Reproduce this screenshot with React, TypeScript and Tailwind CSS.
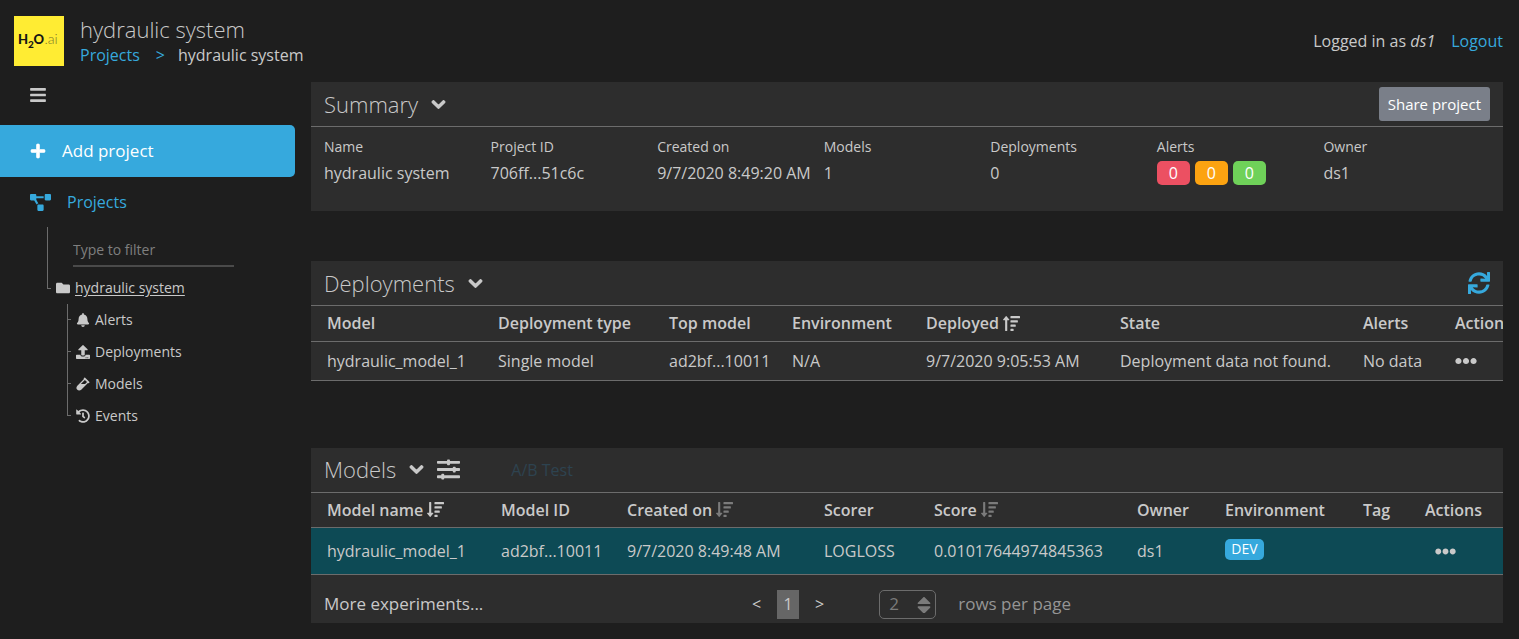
import type { ReactNode } from "react";
import {
  FaBars,
  FaBell,
  FaCaretDown,
  FaCaretUp,
  FaChevronDown,
  FaEllipsisH,
  FaFolder,
  FaHistory,
  FaPlus,
  FaProjectDiagram,
  FaSlidersH,
  FaSortAmountDown,
  FaSortAmountUp,
  FaSync,
  FaUpload,
  FaVial,
} from "react-icons/fa";

type Column = { label: string; width: string; icon?: ReactNode };

const deploymentColumns: Column[] = [
  { label: "Model", width: "w-[187px]" },
  { label: "Deployment type", width: "w-[171px]" },
  { label: "Top model", width: "w-[123px]" },
  { label: "Environment", width: "w-[134px]" },
  { label: "Deployed", width: "w-[194px]", icon: <FaSortAmountUp className="size-[17px]" /> },
  { label: "State", width: "w-[243px]" },
  { label: "Alerts", width: "w-[92px]" },
  { label: "Actions", width: "w-auto" },
];

const modelColumns: Column[] = [
  { label: "Model name", width: "w-[190px]", icon: <FaSortAmountDown className="size-[17px]" /> },
  { label: "Model ID", width: "w-[126px]" },
  { label: "Created on", width: "w-[197px]", icon: <FaSortAmountDown className="size-[17px] text-[#7b7b7b]" /> },
  { label: "Scorer", width: "w-[110px]" },
  { label: "Score", width: "w-[203px]", icon: <FaSortAmountDown className="size-[17px] text-[#7b7b7b]" /> },
  { label: "Owner", width: "w-[88px]" },
  { label: "Environment", width: "w-[138px]" },
  { label: "Tag", width: "w-[62px]" },
  { label: "Actions", width: "w-auto" },
];

const treeItems = [
  { label: "Alerts", icon: <FaBell className="size-[14px]" /> },
  { label: "Deployments", icon: <FaUpload className="size-[14px]" /> },
  { label: "Models", icon: <FaVial className="size-[14px]" /> },
  { label: "Events", icon: <FaHistory className="size-[14px]" /> },
];

const cell = "whitespace-nowrap p-0 text-left first:pl-4";

function Logo() {
  return (
    <svg viewBox="0 0 50 50" className="size-[50px] shrink-0" role="img" aria-label="H2O.ai">
      <rect width="50" height="50" fill="#ffec33" />
      <g fontFamily="Lato, sans-serif">
        <text x="4" y="28" fontSize="13" fontWeight="900" fill="#161616">H</text>
        <text x="14" y="32" fontSize="10" fontWeight="900" fill="#161616">2</text>
        <text x="19.5" y="28" fontSize="13" fontWeight="900" fill="#161616">O</text>
        <text x="30.5" y="28" fontSize="14" fontWeight="300" fill="#7d772c">.ai</text>
      </g>
    </svg>
  );
}

function PanelHeader({ title, children }: { title: string; children?: ReactNode }) {
  return (
    <div className="flex h-[45px] items-center border-b border-[#6c6c6c] px-[13px]">
      <h2 className="text-[22px] font-light">{title}</h2>
      <button type="button" aria-label={`Collapse ${title}`} className="ml-[13px]">
        <FaChevronDown className="size-[15px] stroke-current stroke-[40]" />
      </button>
      {children}
    </div>
  );
}

function HeadRow({ columns }: { columns: Column[] }) {
  return (
    <thead>
      <tr className="h-[35px] border-b border-[#6c6c6c]">
        {columns.map((c) => (
          <th key={c.label} scope="col" className={`${cell} ${c.width} font-semibold`}>
            <span className="inline-flex items-center gap-1">
              {c.label}
              {c.icon}
            </span>
          </th>
        ))}
      </tr>
    </thead>
  );
}

function Field({ label, children }: { label: string; children: ReactNode }) {
  return (
    <div className="flex flex-col">
      <dt className="text-sm leading-5">{label}</dt>
      <dd className="flex h-8 items-center whitespace-nowrap">{children}</dd>
    </div>
  );
}

function Badge({ color, children }: { color: string; children: ReactNode }) {
  return (
    <span className={`flex h-6 w-[33px] items-center justify-center rounded-[5px] text-white ${color}`}>
      {children}
    </span>
  );
}

export default function App() {
  return (
    <div className="min-h-screen bg-[#1e1e1e] font-['Open_Sans',sans-serif] text-base text-[#c9c9c9]">
      <header className="flex h-[82px] items-center pr-4 pl-[14px]">
        <Logo />
        <div className="ml-4">
          <h1 className="text-[22px] leading-7 font-light">hydraulic system</h1>
          <nav aria-label="Breadcrumb" className="flex leading-6">
            <a href="#projects" className="text-[#36a9dd]">Projects</a>
            <span className="mr-[13px] ml-4 text-[#36a9dd]">&gt;</span>
            <span>hydraulic system</span>
          </nav>
        </div>
        <div className="ml-auto flex gap-4">
          <span>
            Logged in as <i>ds1</i>
          </span>
          <a href="#logout" className="text-[#36a9dd]">Logout</a>
        </div>
      </header>

      <div className="flex gap-4">
        <aside className="w-[295px] shrink-0">
          <button type="button" aria-label="Toggle menu" className="flex h-[43px] items-start pt-1 pl-[30px]">
            <FaBars className="h-[18px] w-4" />
          </button>
          <button
            type="button"
            className="flex h-[52px] w-full items-center gap-4 rounded-r-[5px] bg-[#36a9dd] pl-[30px] text-[17px] text-white"
          >
            <FaPlus className="size-4 stroke-current stroke-[20]" />
            Add project
          </button>
          <a href="#projects" className="flex h-[50px] items-center gap-4 pl-[30px] text-[#36a9dd]">
            <FaProjectDiagram className="size-[21px]" />
            Projects
          </a>

          <div className="ml-[47px]">
            <div className="flex h-10 items-end border-l border-[#6c6c6c]">
              <input
                type="text"
                aria-label="Filter projects"
                placeholder="Type to filter"
                className="ml-[25px] h-[34px] w-[161px] border-b-2 border-[#4a4a4a] bg-transparent text-sm outline-none placeholder:text-[#7f7f7f]"
              />
            </div>
            <div className="flex h-[37px]">
              <div className="h-[22px] w-1 border-b border-l border-[#6c6c6c]" />
              <a href="#hydraulic-system" className="ml-[5px] flex h-8 items-center gap-[5px] self-end text-sm">
                <FaFolder className="size-[14px]" />
                <span className="underline underline-offset-2">hydraulic system</span>
              </a>
            </div>
            <ul className="ml-5 text-sm">
              {treeItems.map((item) => (
                <li key={item.label} className="group flex h-8">
                  <div className="flex h-full w-1 flex-col">
                    <div className="h-4 border-b border-l border-[#6c6c6c]" />
                    <div className="h-4 border-l border-[#6c6c6c] group-last:border-transparent" />
                  </div>
                  <a href={`#${item.label.toLowerCase()}`} className="ml-[5px] flex items-center gap-[5px]">
                    {item.icon}
                    {item.label}
                  </a>
                </li>
              ))}
            </ul>
          </div>
        </aside>

        <main className="min-w-0 flex-1 pr-4 pb-4">
          <section className="mb-[50px] bg-[#2d2d2d]">
            <PanelHeader title="Summary">
              <button
                type="button"
                className="ml-auto h-[34px] rounded-[3px] bg-[#7a7f89] px-[9px] text-[15px] text-white"
              >
                Share project
              </button>
            </PanelHeader>
            <dl className="grid h-[84px] grid-cols-7 px-[13px] pt-[10px]">
              <Field label="Name">hydraulic system</Field>
              <Field label="Project ID">706ff...51c6c</Field>
              <Field label="Created on">9/7/2020 8:49:20 AM</Field>
              <Field label="Models">1</Field>
              <Field label="Deployments">0</Field>
              <Field label="Alerts">
                <span className="flex gap-[5px]">
                  <Badge color="bg-[#ec5062]">0</Badge>
                  <Badge color="bg-[#fca311]">0</Badge>
                  <Badge color="bg-[#6fd159]">0</Badge>
                </span>
              </Field>
              <Field label="Owner">ds1</Field>
            </dl>
          </section>

          <section className="mb-[67px] overflow-hidden bg-[#2d2d2d]">
            <PanelHeader title="Deployments">
              <button type="button" aria-label="Refresh deployments" className="ml-auto text-[#36a9dd]">
                <FaSync className="size-[22px]" />
              </button>
            </PanelHeader>
            <table className="w-full table-fixed border-collapse">
              <HeadRow columns={deploymentColumns} />
              <tbody>
                <tr className="h-[39px] border-b border-[#6c6c6c]">
                  <td className={cell}>hydraulic_model_1</td>
                  <td className={cell}>Single model</td>
                  <td className={cell}>ad2bf...10011</td>
                  <td className={cell}>N/A</td>
                  <td className={cell}>9/7/2020 9:05:53 AM</td>
                  <td className={cell}>Deployment data not found.</td>
                  <td className={cell}>No data</td>
                  <td className={cell}>
                    <button type="button" aria-label="Deployment actions" className="block">
                      <FaEllipsisH className="size-[22px]" />
                    </button>
                  </td>
                </tr>
              </tbody>
            </table>
          </section>

          <section className="overflow-hidden bg-[#2d2d2d]">
            <PanelHeader title="Models">
              <button type="button" aria-label="Model filters" className="ml-[13px]">
                <FaSlidersH className="size-[23px]" />
              </button>
              <button type="button" disabled className="ml-[51px] text-[#2d4350]">
                A/B Test
              </button>
            </PanelHeader>
            <table className="w-full table-fixed border-collapse">
              <HeadRow columns={modelColumns} />
              <tbody>
                <tr className="h-[47px] border-b border-[#6c6c6c] bg-[#0d4a55]">
                  <td className={cell}>hydraulic_model_1</td>
                  <td className={cell}>ad2bf...10011</td>
                  <td className={cell}>9/7/2020 8:49:48 AM</td>
                  <td className={cell}>LOGLOSS</td>
                  <td className={cell}>0.01017644974845363</td>
                  <td className={cell}>ds1</td>
                  <td className={cell}>
                    <span className="mb-1 flex h-[21px] w-[39px] items-center justify-center rounded-[5px] bg-[#36a9dd] text-sm text-white">
                      DEV
                    </span>
                  </td>
                  <td className={cell} />
                  <td className={cell}>
                    <button type="button" aria-label="Model actions" className="ml-[10px] block">
                      <FaEllipsisH className="size-[21px]" />
                    </button>
                  </td>
                </tr>
              </tbody>
            </table>
            <footer className="grid h-12 grid-cols-[1fr_auto_1fr] items-center pt-[10px] pr-1 pl-[13px]">
              <a href="#experiments" className="text-[17px]">More experiments...</a>
              <div className="flex items-center">
                <button type="button" aria-label="Previous page">&lt;</button>
                <button type="button" aria-current="page" className="mx-4 h-[29px] w-[22px] bg-[#666666]">
                  1
                </button>
                <button type="button" aria-label="Next page">&gt;</button>
                <div className="ml-[55px] flex h-[29px] w-[57px] items-center justify-between rounded-[5px] border border-[#6c6c6c] pr-1 pl-[9px] text-[#7b7b7b]">
                  <input
                    id="page-size"
                    type="text"
                    inputMode="numeric"
                    defaultValue="2"
                    className="w-5 bg-transparent text-[17px] outline-none"
                  />
                  <span className="flex flex-col">
                    <button type="button" aria-label="More rows" className="flex h-[9px] items-center overflow-hidden">
                      <FaCaretUp className="h-[22px] w-[14px]" />
                    </button>
                    <button type="button" aria-label="Fewer rows" className="flex h-[9px] items-center overflow-hidden">
                      <FaCaretDown className="h-[22px] w-[14px]" />
                    </button>
                  </span>
                </div>
                <label htmlFor="page-size" className="ml-[22px] text-[17px] text-[#959595]">rows per page</label>
              </div>
            </footer>
          </section>
        </main>
      </div>
    </div>
  );
}
